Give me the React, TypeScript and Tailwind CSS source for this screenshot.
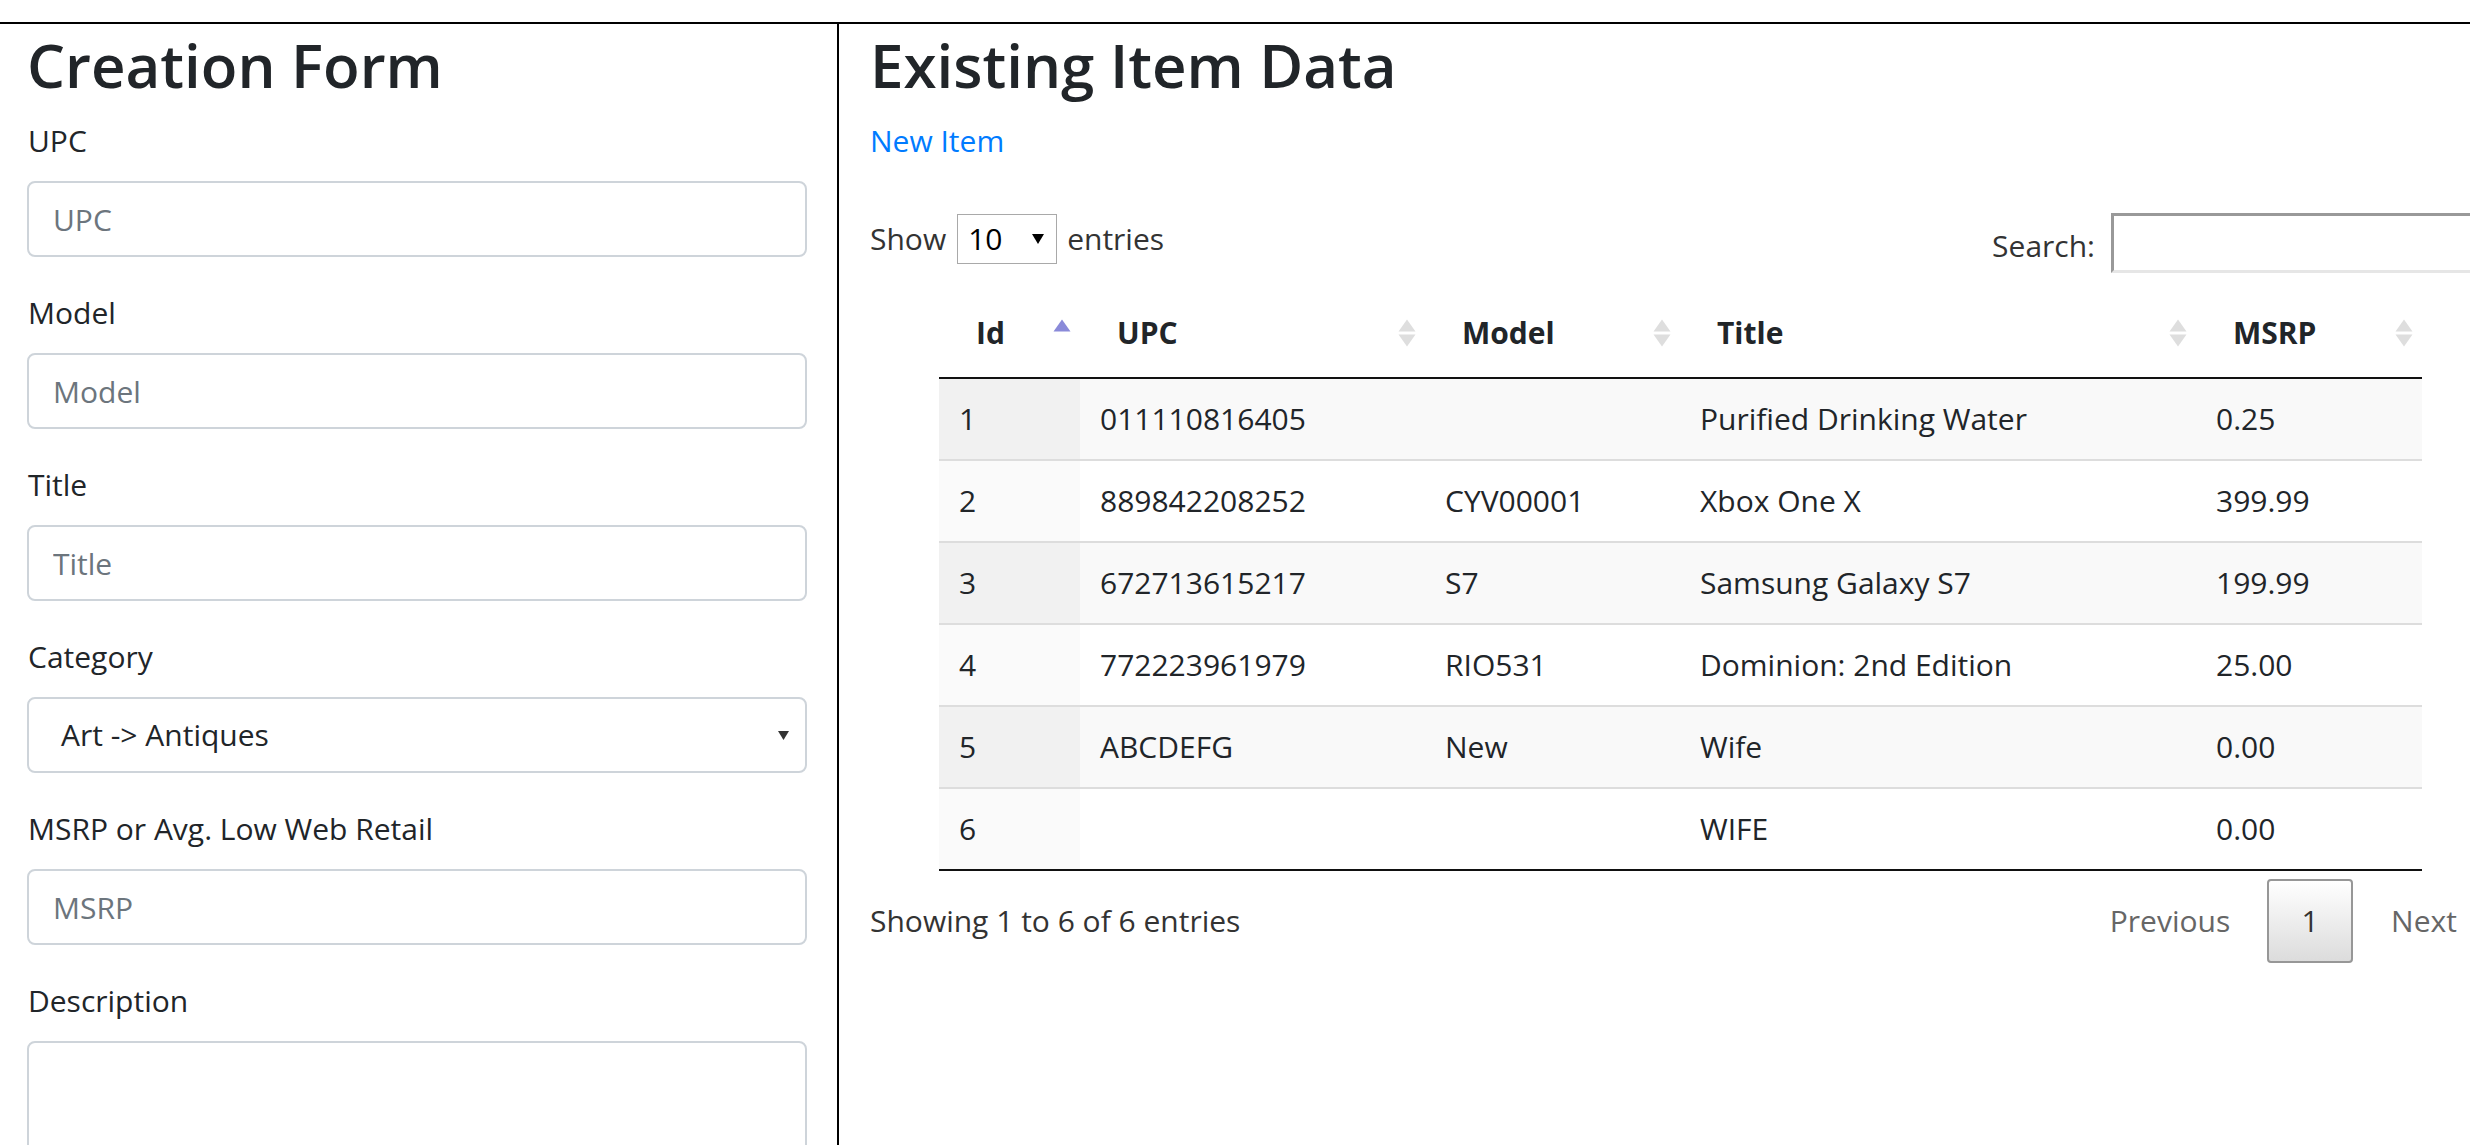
import React from 'react';

const rows = [
  { id: 1, upc: '011110816405', model: '', title: 'Purified Drinking Water', msrp: '0.25' },
  { id: 2, upc: '889842208252', model: 'CYV00001', title: 'Xbox One X', msrp: '399.99' },
  { id: 3, upc: '672713615217', model: 'S7', title: 'Samsung Galaxy S7', msrp: '199.99' },
  { id: 4, upc: '772223961979', model: 'RIO531', title: 'Dominion: 2nd Edition', msrp: '25.00' },
  { id: 5, upc: 'ABCDEFG', model: 'New', title: 'Wife', msrp: '0.00' },
  { id: 6, upc: '', model: '', title: 'WIFE', msrp: '0.00' },
];

const columns = [
  { label: 'Id', width: 'w-[141px]', active: true },
  { label: 'UPC', width: 'w-[345px]', active: false },
  { label: 'Model', width: 'w-[255px]', active: false },
  { label: 'Title', width: 'w-[516px]', active: false },
  { label: 'MSRP', width: 'w-[226px]', active: false },
];

function SortIcon({ active }: { active: boolean }) {
  return (
    <svg width="18" height="28" viewBox="0 0 18 28" className="shrink-0">
      <path d="M9 0.5 L17.5 12.5 L0.5 12.5 Z" fill={active ? '#8a8ad9' : '#dedede'} />
      {!active && <path d="M0.5 15.5 L17.5 15.5 L9 27.5 Z" fill="#dedede" />}
    </svg>
  );
}

function Field({ label, placeholder }: { label: string; placeholder: string }) {
  return (
    <div className="mb-[32px]">
      <label className="mb-[16px] block pl-[1px]">{label}</label>
      <input
        placeholder={placeholder}
        className="block h-[76px] w-full rounded-[8px] border-2 border-[#ced4da] bg-white px-[24px] text-[30px] outline-none placeholder:text-[#6c757d]"
      />
    </div>
  );
}

export default function App() {
  return (
    <div className="h-[1145px] overflow-hidden bg-white font-['Open_Sans',sans-serif] text-[30px] leading-[48px] text-[#212529]">
      <div className="h-[22px]" />
      <div className="flex border-t-2 border-black">
        {/* Creation form */}
        <div className="h-[1200px] w-[839px] shrink-0 border-r-2 border-black pl-[27px] pr-[30px]">
          <h2 className="mb-[13px] pt-[3px] text-[60px] font-semibold leading-[77px]">Creation Form</h2>
          <Field label="UPC" placeholder="UPC" />
          <Field label="Model" placeholder="Model" />
          <Field label="Title" placeholder="Title" />
          <div className="mb-[32px]">
            <label className="mb-[16px] block pl-[1px]">Category</label>
            <div className="flex h-[76px] items-center justify-between rounded-[8px] border-2 border-[#ced4da] bg-white pl-[32px] pr-[16px]">
              <span>Art -&gt; Antiques</span>
              <svg width="11" height="9" viewBox="0 0 11 9">
                <path d="M0 0 L11 0 L5.5 9 Z" fill="#333" />
              </svg>
            </div>
          </div>
          <Field label="MSRP or Avg. Low Web Retail" placeholder="MSRP" />
          <div className="mb-[32px]">
            <label className="mb-[16px] block pl-[1px]">Description</label>
            <textarea className="block h-[200px] w-full resize-none rounded-[8px] border-2 border-[#ced4da] bg-white px-[24px] py-[12px] text-[30px] outline-none" />
          </div>
        </div>

        {/* Item table */}
        <div className="w-[1655px] shrink-0 pl-[31px]">
          <h2 className="mb-[13px] pt-[3px] text-[60px] font-semibold leading-[77px]">Existing Item Data</h2>
          <p className="mb-[16px]">
            <a className="text-[#007bff]">New Item</a>
          </p>

          <div className="mt-[48px] flex items-start justify-between text-[#333]">
            <div className="flex h-[52px] items-center">
              <span>Show</span>
              <div className="ml-[11px] flex h-[50px] w-[100px] items-center justify-between border border-[#a9a9a9] pl-[10px] pr-[12px] text-black">
                <span>10</span>
                <svg width="12" height="10" viewBox="0 0 12 10">
                  <path d="M0 0 L12 0 L6 10 Z" fill="#000" />
                </svg>
              </div>
              <span className="ml-[10px]">entries</span>
            </div>
            <div className="mr-[3px] flex h-[60px] items-center">
              <span className="pt-[5px]">Search:</span>
              <div className="ml-[16px] h-[60px] w-[380px] border-[3px] border-t-[#999] border-r-[#e6e6e6] border-b-[#e6e6e6] border-l-[#999] bg-white" />
            </div>
          </div>

          <table className="ml-[69px] mt-[16px] w-[1483px] table-fixed border-collapse border-b-2 border-[#111]">
            <thead>
              <tr className="border-b-2 border-[#111]">
                {columns.map((c) => (
                  <th key={c.label} className={`${c.width} p-0 text-left font-bold`}>
                    <div className="flex items-center justify-between py-[20px] pl-[37px] pr-[9px]">
                      <span>{c.label}</span>
                      <SortIcon active={c.active} />
                    </div>
                  </th>
                ))}
              </tr>
            </thead>
            <tbody>
              {rows.map((r, i) => {
                const odd = i % 2 === 0;
                return (
                  <tr
                    key={r.id}
                    className={`${i > 0 ? 'border-t-2 border-[#ddd]' : ''} ${odd ? 'bg-[#f9f9f9]' : 'bg-white'}`}
                  >
                    <td className={`px-[20px] py-[16px] ${odd ? 'bg-[#f1f1f1]' : 'bg-[#fafafa]'}`}>{r.id}</td>
                    <td className="px-[20px] py-[16px]">{r.upc}</td>
                    <td className="px-[20px] py-[16px]">{r.model}</td>
                    <td className="px-[20px] py-[16px]">{r.title}</td>
                    <td className="px-[20px] py-[16px]">{r.msrp}</td>
                  </tr>
                );
              })}
            </tbody>
          </table>

          <div className="mr-[3px] flex items-start justify-between text-[#333]">
            <div className="pt-[26px]">Showing 1 to 6 of 6 entries</div>
            <div className="flex pt-[8px]">
              <div className="flex h-[84px] w-[186px] items-center justify-center text-[#666]">Previous</div>
              <div className="ml-[4px] flex h-[84px] w-[86px] items-center justify-center rounded-[4px] border-2 border-[#979797] bg-linear-to-b from-white to-[#dcdcdc] text-[#333]">
                1
              </div>
              <div className="ml-[4px] flex h-[84px] w-[134px] items-center justify-center text-[#666]">Next</div>
            </div>
          </div>
        </div>
      </div>
    </div>
  );
}
